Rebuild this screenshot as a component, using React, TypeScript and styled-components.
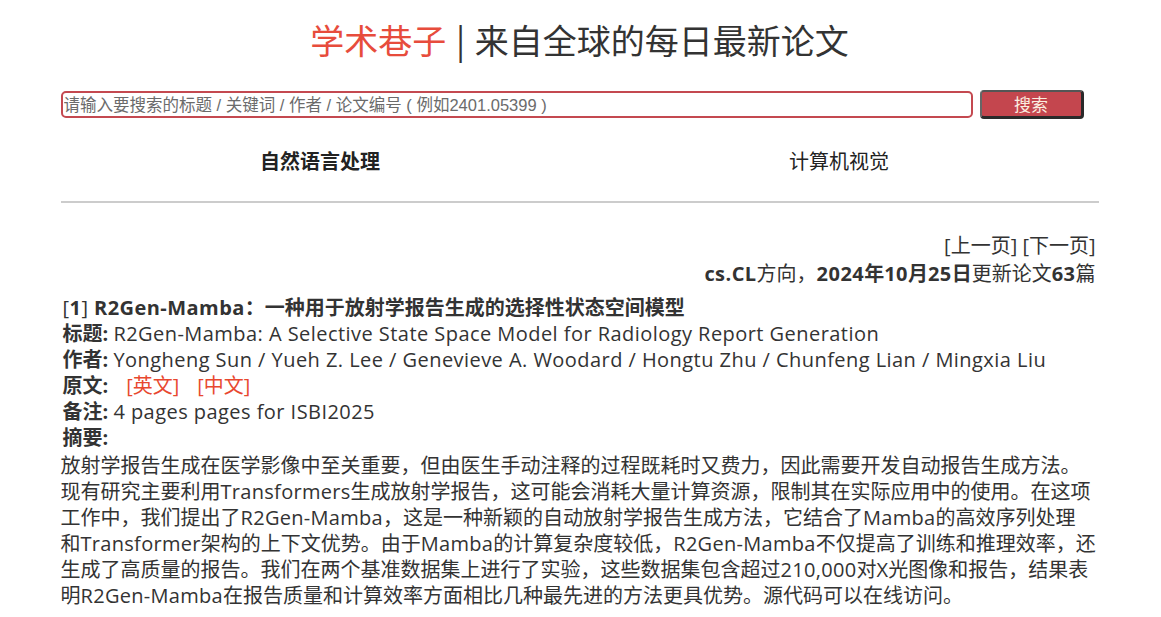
import React from "react";
import styled, { createGlobalStyle } from "styled-components";

const GlobalStyle = createGlobalStyle`
  html, body {
    margin: 0;
    padding: 0;
    background: #ffffff;
  }
  body {
    font-family: "Open Sans", "Noto Sans CJK SC", sans-serif;
    color: #333333;
  }
  * { box-sizing: border-box; }
`;

const Page = styled.div`
  width: 1038px;
  margin-left: calc(50% - 520px);
  padding-top: 19px;
`;

const Title = styled.h1`
  margin: 0;
  text-align: center;
  font-size: 34px;
  line-height: 42px;
  font-weight: 400;
  color: #333333;
  font-family: "Noto Sans CJK SC", sans-serif;
  word-spacing: 2px;
`;

const Brand = styled.span`
  color: #e74c3c;
`;

const SearchRow = styled.form`
  display: flex;
  align-items: center;
  gap: 7px;
  margin-top: 29px;
  padding-right: 15px;
`;

const SearchInput = styled.input`
  flex: 1;
  height: 27px;
  border: 2px solid #c44950;
  border-radius: 5px;
  padding: 1px 1px 0;
  font-size: 16.5px;
  font-family: "Liberation Sans", "Noto Sans CJK SC", sans-serif;
  color: #333;
  outline: none;
  &::placeholder {
    color: #6b6b6b;
  }
`;

const SearchButton = styled.button`
  width: 104px;
  height: 29px;
  background: #c4464e;
  color: #fbeee0;
  font-size: 17px;
  font-family: "Noto Sans CJK SC", sans-serif;
  border-style: solid;
  border-width: 2px 3px 3px 2px;
  border-color: #555 #2a2a2a #2a2a2a #666;
  border-radius: 4px;
  padding: 0;
  line-height: 24px;
`;

const Tabs = styled.nav`
  display: grid;
  grid-template-columns: 1fr 1fr;
  margin-top: 27px;
  padding-bottom: 25px;
  border-bottom: 2px solid #cccccc;
`;

const Tab = styled.a<{ $active?: boolean }>`
  text-align: center;
  font-size: 20px;
  line-height: 30px;
  font-weight: ${(p) => (p.$active ? 700 : 400)};
  color: #222;
  text-decoration: none;
  font-family: "Noto Sans CJK SC", sans-serif;
`;

const Meta = styled.div`
  text-align: right;
  margin-top: 29px;
  padding-right: 3px;
  font-size: 20px;
  line-height: 28px;
`;

const PageLink = styled.a`
  color: #333;
  text-decoration: none;
`;

const Paper = styled.div`
  margin-top: 7px;
  font-size: 20px;
  line-height: 26px;
  padding-left: 2px;
`;

const Line = styled.div``;

const Label = styled.b`
  font-weight: 700;
`;

const En = styled.span<{ $bold?: boolean; $tight?: boolean }>`
  letter-spacing: ${(p) => (p.$tight ? "0.3px" : "0.45px")};
  font-weight: ${(p) => (p.$bold ? 700 : "inherit")};
`;

const SourceLink = styled.a`
  color: #e8482f;
  text-decoration: none;
  margin-left: 18px;
  & + & {
    margin-left: 18px;
  }
`;

const Abstract = styled.p`
  margin: 2px 0 0 -2px;
  font-size: 20px;
  line-height: 26px;
`;

const AbstractLine = styled.span`
  display: block;
  white-space: nowrap;
`;

const abstractLines: React.ReactNode[] = [
  <>放射学报告生成在医学影像中至关重要，但由医生手动注释的过程既耗时又费力，因此需要开发自动报告生成方法。</>,
  <>现有研究主要利用<En $tight>Transformers</En>生成放射学报告，这可能会消耗大量计算资源，限制其在实际应用中的使用。在这项</>,
  <>工作中，我们提出了<En $tight>R2Gen-Mamba</En>，这是一种新颖的自动放射学报告生成方法，它结合了<En $tight>Mamba</En>的高效序列处理</>,
  <>和<En $tight>Transformer</En>架构的上下文优势。由于<En $tight>Mamba</En>的计算复杂度较低，<En $tight>R2Gen-Mamba</En>不仅提高了训练和推理效率，还</>,
  <>生成了高质量的报告。我们在两个基准数据集上进行了实验，这些数据集包含超过<En $tight>210,000</En>对<En $tight>X</En>光图像和报告，结果表</>,
  <>明<En $tight>R2Gen-Mamba</En>在报告质量和计算效率方面相比几种最先进的方法更具优势。源代码可以在线访问。</>,
];

export default function App() {
  return (
    <>
      <GlobalStyle />
      <Page>
        <Title>
          <Brand>学术巷子</Brand> | 来自全球的每日最新论文
        </Title>
        <SearchRow onSubmit={(e) => e.preventDefault()}>
          <SearchInput placeholder="请输入要搜索的标题 / 关键词 / 作者 / 论文编号 ( 例如2401.05399 )" />
          <SearchButton type="submit">搜索</SearchButton>
        </SearchRow>
        <Tabs>
          <Tab $active href="#">自然语言处理</Tab>
          <Tab href="#">计算机视觉</Tab>
        </Tabs>
        <Meta>
          <div>
            <PageLink href="#">[上一页]</PageLink> <PageLink href="#">[下一页]</PageLink>
          </div>
          <div>
            <En $bold>cs.CL</En>方向，<b><En>2024</En>年<En>10</En>月<En>25</En>日</b>更新论文<En $bold>63</En>篇
          </div>
        </Meta>
        <Paper>
          <Line>
            <En>[</En><En $bold>1</En><En>] </En><b><En>R2Gen-Mamba</En>：一种用于放射学报告生成的选择性状态空间模型</b>
          </Line>
          <Line>
            <Label>标题:</Label> <En>R2Gen-Mamba: A Selective State Space Model for Radiology Report Generation</En>
          </Line>
          <Line>
            <Label>作者:</Label> <En>Yongheng Sun / Yueh Z. Lee / Genevieve A. Woodard / Hongtu Zhu / Chunfeng Lian / Mingxia Liu</En>
          </Line>
          <Line>
            <Label>原文:</Label>
            <SourceLink href="#">[英文]</SourceLink>
            <SourceLink href="#">[中文]</SourceLink>
          </Line>
          <Line>
            <Label>备注:</Label> <En>4 pages pages for ISBI2025</En>
          </Line>
          <Line>
            <Label>摘要:</Label>
          </Line>
          <Abstract>
            {abstractLines.map((content, i) => (
              <AbstractLine key={i}>{content}</AbstractLine>
            ))}
          </Abstract>
        </Paper>
      </Page>
    </>
  );
}
